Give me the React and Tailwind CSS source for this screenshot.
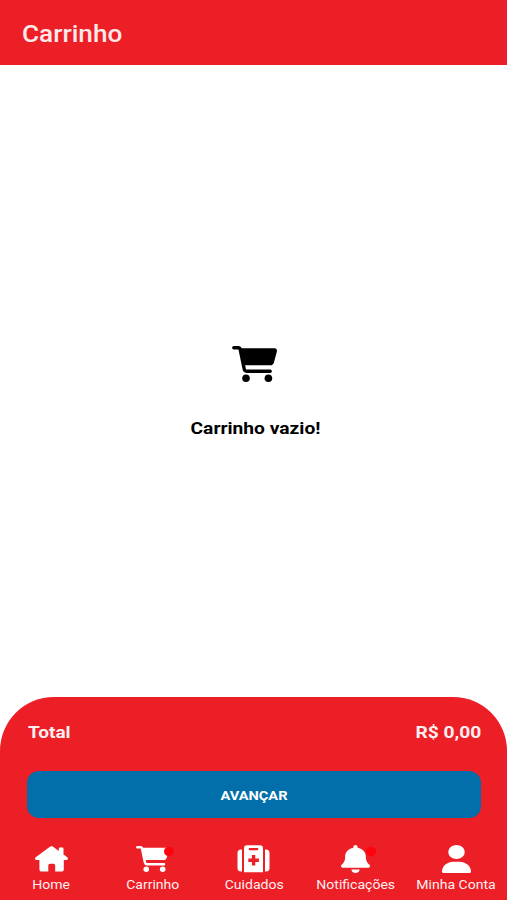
import { FaBell, FaUser } from 'react-icons/fa6'

function CartIcon({ className }) {
  return (
    <svg viewBox="0 0 45 36" preserveAspectRatio="none" fill="none" className={className}>
      <path
        d="M1.8 1.8H6.2C7.3 1.8 8 2.4 8.2 3.4L12.2 23C12.5 24.5 13.3 25.2 14.7 25.2H38.2"
        stroke="currentColor"
        strokeWidth="3.4"
        strokeLinecap="round"
      />
      <path
        d="M7.5 2.3H42.6C44.3 2.3 45.3 3.8 44.9 5.4L41.9 16.4C41.5 18.1 40.2 19.3 38.5 19.3H11.2Z"
        fill="currentColor"
      />
      <circle cx="14" cy="32.2" r="3.8" fill="currentColor" />
      <circle cx="36.4" cy="32.2" r="3.8" fill="currentColor" />
    </svg>
  )
}

function HomeIcon({ className }) {
  return (
    <svg viewBox="0 0 33 26" fill="currentColor" className={className}>
      <path d="M15.3.6c.7-.6 1.7-.6 2.4 0L23.8 5V2.7c0-.7.5-1.2 1.2-1.2h2.3c.7 0 1.2.5 1.2 1.2v5.7l3.8 2.9c1.2 1 .6 2.8-.9 2.8h-2.6v9.1c0 1.4-.9 2.3-2.3 2.3h-6.3v-5.8c0-1.3-.8-2-2-2h-2.9c-1.3 0-2 .7-2 2v5.8H6.7c-1.4 0-2.3-.9-2.3-2.3v-9.1H1.6c-1.5 0-2.1-1.8-.9-2.8Z" />
    </svg>
  )
}

function MedkitIcon({ className }) {
  return (
    <svg viewBox="0 0 33 28" fill="currentColor" className={className}>
      <path d="M5 4.5v22H4a3.5 3.5 0 0 1-3.5-3.5V8A3.5 3.5 0 0 1 4 4.5ZM28 4.5v22h1a3.5 3.5 0 0 0 3.5-3.5V8A3.5 3.5 0 0 0 29 4.5Z" />
      <path
        fillRule="evenodd"
        d="M10 .3h13a3 3 0 0 1 3 3v23.9H7V3.3a3 3 0 0 1 3-3ZM12.7 3a1.1 1.1 0 0 0 0 2.2h7.6a1.1 1.1 0 0 0 0-2.2ZM14.9 10v3.6h-3.6v3.4h3.6v3.6h3.4V17h3.6v-3.4h-3.6V10Z"
      />
    </svg>
  )
}

const TABS = [
  { label: 'Home', Icon: HomeIcon, iconClass: 'h-[26px] w-[33px]' },
  { label: 'Carrinho', Icon: CartIcon, iconClass: 'h-[26px] w-[33px]', badge: true },
  { label: 'Cuidados', Icon: MedkitIcon, iconClass: 'h-[28px] w-[33px]' },
  { label: 'Notificações', Icon: FaBell, iconClass: 'h-[28px] w-[29px]', badge: true },
  { label: 'Minha Conta', Icon: FaUser, iconClass: 'h-[28px] w-[29px]' },
]

function TabItem({ label, Icon, iconClass, badge }) {
  return (
    <button className="flex min-w-0 flex-col items-center">
      <span className="relative flex h-[30px] items-center justify-center text-white">
        <Icon preserveAspectRatio="none" className={iconClass} />
        {badge && <span className="absolute top-[3px] left-1/2 ml-[11px] h-[9px] w-[10px] rounded-full bg-[#fd0410]" />}
      </span>
      <span className="mt-[3px] scale-x-117 text-[12px] leading-4 whitespace-nowrap">{label}</span>
    </button>
  )
}

export default function App() {
  return (
    <div className="flex h-[900px] w-full flex-col overflow-hidden bg-white font-['Roboto',sans-serif]">
      <header className="flex h-[65px] items-center bg-[#ec1e26] pt-[2px] pl-[22px] text-[#ffe9e9]">
        <h1 className="origin-left scale-x-109 text-[24px] leading-7 font-medium">Carrinho</h1>
      </header>

      <main className="flex flex-1 flex-col items-center pt-[281px] pl-[2px] text-black">
        <CartIcon className="h-[36px] w-[45px]" />
        <p className="mt-[34px] ml-[2px] scale-x-113 text-[17px] leading-6 font-bold">Carrinho vazio!</p>
      </main>

      <footer className="h-[203px] rounded-t-[54px] bg-[#ec1e26] text-[#ffeff0]">
        <div className="flex items-center justify-between pt-[23px] pr-[26px] pl-7 text-[17px] leading-6 font-bold">
          <span className="origin-left scale-x-112">Total</span>
          <span className="origin-right scale-x-113">R$ 0,00</span>
        </div>
        <button className="mt-[27px] ml-[27px] flex h-[47px] w-[454px] items-center justify-center rounded-[12px] bg-[#026faa] pt-px pl-px text-white">
          <span className="scale-x-108 text-[13.5px] font-bold">AVANÇAR</span>
        </button>
        <nav className="mt-[26px] grid grid-cols-5 pl-px">
          {TABS.map((tab) => (
            <TabItem key={tab.label} {...tab} />
          ))}
        </nav>
      </footer>
    </div>
  )
}
